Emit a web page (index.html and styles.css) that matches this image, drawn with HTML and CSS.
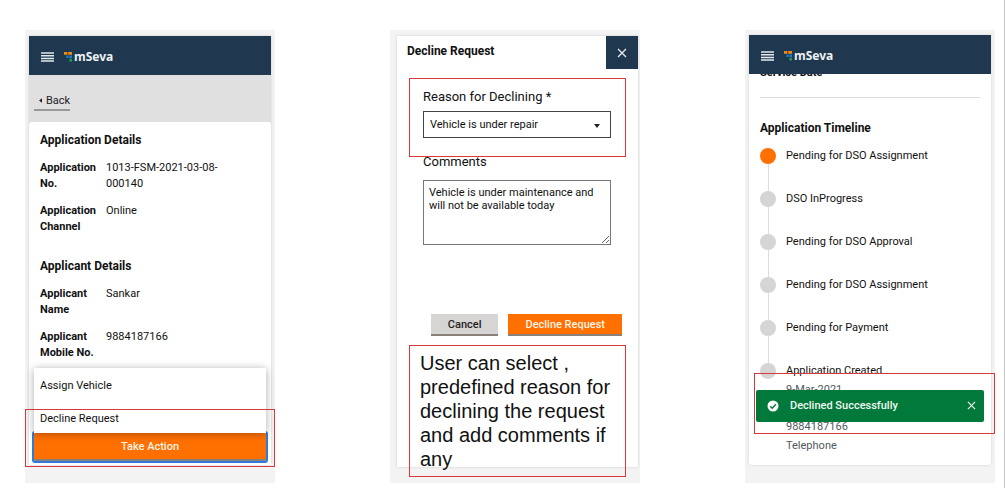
FILE: index.html
```html
<!DOCTYPE html>
<html lang="en">
<head>
<meta charset="utf-8">
<meta name="viewport" content="width=device-width, initial-scale=1">
<title>mSeva – Decline Request</title>
<link rel="stylesheet" href="styles.css">
</head>
<body>
<svg class="defs" aria-hidden="true">
  <symbol id="menu" viewBox="0 0 13 10"><path d="M0 1h13M0 3.700h13M0 6.400h13M0 9.100h13" stroke="#e3e8ec" stroke-width="1.500"/></symbol>
  <symbol id="mark" viewBox="0 0 9 10">
    <path fill="#f08a12" d="M0 0h3.400v2.700H0zM4.200 0h3.800v2.700H4.200z"/>
    <path fill="#1c7fc4" d="M2.400 3.500h2.200v2.400H2.400zM5.400 3.500h2.600v2.400H5.400z"/>
    <path fill="#15a255" d="M5.400 6.700h2.600v2.800H5.400z"/>
  </symbol>
  <symbol id="cross" viewBox="0 0 10 10"><path d="M1 1l8 8M9 1l-8 8" fill="none" stroke="currentColor" stroke-width="1.300"/></symbol>
</svg>
<main class="board">
  <section class="phone">
    <div class="screen">
      <header class="bar">
        <button class="icon-button" aria-label="Menu"><svg class="menu-icon"><use href="#menu"/></svg></button>
        <span class="brand"><svg class="mark"><use href="#mark"/></svg>mSeva</span>
      </header>
      <nav class="crumb"><a class="back" href="#"><svg class="caret" viewBox="0 0 4 6"><path d="M4 0v6L0 3z" fill="#222"/></svg>Back</a></nav>
      <div class="card details">
        <h2 class="heading">Application Details</h2>
        <dl class="facts">
          <dt>Application No.</dt><dd>1013-FSM-2021-03-08-000140</dd>
          <dt>Application Channel</dt><dd>Online</dd>
        </dl>
        <h2 class="heading">Applicant Details</h2>
        <dl class="facts">
          <dt>Applicant Name</dt><dd>Sankar</dd>
          <dt>Applicant Mobile No.</dt><dd>9884187166</dd>
        </dl>
      </div>
      <div class="actions">
        <div class="menu">
          <button class="menu-item">Assign Vehicle</button>
          <button class="menu-item">Decline Request</button>
        </div>
        <button class="button primary take">Take Action</button>
      </div>
    </div>
    <div class="callout callout-action"></div>
  </section>

  <section class="phone phone-dialog">
    <div class="screen dialog">
      <header class="dialog-head">
        <h2 class="dialog-title">Decline Request</h2>
        <button class="close" aria-label="Close"><svg class="cross"><use href="#cross"/></svg></button>
      </header>
      <form class="form">
        <label class="label" for="reason">Reason for Declining *</label>
        <div class="select-wrap">
          <select class="select" id="reason"><option>Vehicle is under repair</option></select>
          <svg class="arrow" viewBox="0 0 6 4"><path d="M0 0h6L3 4z" fill="#222"/></svg>
        </div>
        <label class="label" for="comments">Comments</label>
        <textarea class="textarea" id="comments">Vehicle is under maintenance and will not be available today</textarea>
      </form>
      <footer class="dialog-foot">
        <button class="button secondary">Cancel</button>
        <button class="button primary">Decline Request</button>
      </footer>
    </div>
    <div class="callout callout-reason"></div>
    <p class="callout note">User can select , predefined reason for declining the request and add comments if any</p>
  </section>

  <section class="phone phone-timeline">
    <div class="screen">
      <header class="bar">
        <button class="icon-button" aria-label="Menu"><svg class="menu-icon"><use href="#menu"/></svg></button>
        <span class="brand"><svg class="mark"><use href="#mark"/></svg>mSeva</span>
      </header>
      <div class="card history">
        <p class="service">Service Date</p>
        <hr class="rule">
        <h2 class="heading">Application Timeline</h2>
        <ol class="timeline">
          <li class="step current">Pending for DSO Assignment</li>
          <li class="step">DSO InProgress</li>
          <li class="step">Pending for DSO Approval</li>
          <li class="step">Pending for DSO Assignment</li>
          <li class="step">Pending for Payment</li>
          <li class="step">Application Created</li>
        </ol>
        <div class="meta">
          <p class="date">9-Mar-2021</p>
          <p>9884187166</p>
          <p>Telephone</p>
        </div>
      </div>
    </div>
    <div class="toast" role="status">
      <svg class="check" viewBox="0 0 12 12"><circle cx="6" cy="6" r="5.500" fill="#fff"/><path d="M3.200 6.200l2 2 3.700-4" fill="none" stroke="#00793a" stroke-width="1.400"/></svg>
      <span class="toast-text">Declined Successfully</span>
      <button class="icon-button" aria-label="Dismiss"><svg class="cross small"><use href="#cross"/></svg></button>
    </div>
    <div class="callout callout-toast"></div>
  </section>
</main>
</body>
</html>
```
FILE: styles.css
```css
* { box-sizing: border-box; margin: 0; padding: 0; }
body {
  min-height: 100vh;
  border-right: 1px solid #c4c4c4;
  background: #fff;
  color: #111;
  font: 11px/16px Roboto, "Liberation Sans", sans-serif;
}
button, select, textarea { font: inherit; color: inherit; border: 0; border-radius: 0; background: none; }
svg { display: block; }
.defs { position: absolute; width: 0; height: 0; }

.board {
  display: grid;
  grid-template-columns: 1fr 115px 1fr 105px 1fr;
  padding: 30px 9px 6px 25px;
}
.phone {
  position: relative;
  padding: 6px 4px 18px;
  background: #f3f3f3;
}
.phone-dialog { grid-column: 3; padding: 6px 2px 16px 7px; }
.phone-timeline { grid-column: 5; padding-top: 5px; }
.screen { display: flex; flex-direction: column; height: 100%; background: #fff; }
.phone .screen { box-shadow: 0 0 3px #0002; }

.bar {
  position: relative;
  z-index: 1;
  display: flex;
  align-items: center;
  gap: 10px;
  height: 39px;
  padding: 2px 12px 0;
  background: #1f3850;
}
.icon-button { display: flex; }
.menu-icon { width: 13px; height: 10px; }
.brand { display: flex; align-items: center; gap: 1px; color: #eef1f4; font: bold 12px/16px "Noto Sans", "Open Sans", sans-serif; }
.mark { width: 9px; height: 10px; }

.crumb { padding: 17px 5px 11px; background: #e0e0e0; }
.back {
  display: inline-flex;
  align-items: center;
  gap: 4px;
  padding-left: 5px;
  border-bottom: 2px solid #999;
  color: #222;
  text-decoration: none;
}
.caret { width: 3px; height: 5px; }
.card { padding: 0 11px; background: #fff; }
.details { padding-top: 10px; border-radius: 3px 3px 0 0; box-shadow: 0 -3px 0 #e0e0e0; }
.heading { font-size: 12px; line-height: 16px; font-weight: 700; }
.facts {
  display: grid;
  grid-template-columns: 54px 1fr;
  gap: 11px 12px;
  padding: 12px 28px 23px 0;
}
.facts dt { font-weight: 700; }
.facts:last-child { padding-bottom: 7px; }

.actions { position: relative; margin-top: auto; padding: 0 5px 4px; }
.menu {
  position: relative;
  z-index: 1;
  display: grid;
  background: #fff;
  box-shadow: 0 1px 8px #0005;
}
.menu-item { padding: 11px 6px 6px; line-height: 16px; text-align: left; }
.menu-item:first-child { padding-top: 10px; }
.button { padding: 3px 17px 1px; line-height: 16px; font-weight: 500; border-bottom: 2px solid #8a817a; }
.primary { background: #ff7000; color: #fff3e4; }
.secondary { background: #d6d5d4; color: #222; }
.take { display: block; width: 100%; padding: 6px 5px 4px; outline: 2px solid #2f7bdc; outline-offset: 0; border-radius: 1px; }

.callout { position: absolute; z-index: 3; border: 1px solid #d8383c; }
.callout-action { left: 0; right: 0; bottom: 16px; height: 58px; }
.callout-reason { left: 19px; right: 14px; top: 48px; height: 79px; }
.callout-toast { left: 9px; right: 0; bottom: 49px; height: 61px; }
.note {
  left: 19px;
  right: 14px;
  bottom: 6px;
  padding: 5px 10px;
  color: #111;
  font: 20px/24px "Liberation Sans", Arial, sans-serif;
}

.dialog-head { display: flex; justify-content: space-between; }
.dialog-title { padding: 7px 10px; font-size: 12px; line-height: 16px; }
.close {
  display: grid;
  place-items: center;
  width: 32px;
  height: 33px;
  background: #1f3850;
  color: #e6ebef;
}
.cross { width: 10px; height: 10px; }
.small { width: 9px; height: 9px; }
.form { display: flex; flex-direction: column; padding: 20px 27px 0 26px; }
.label { font-size: 13px; line-height: 16px; }
.select-wrap { position: relative; margin: 6px 0 16px; }
.select { display: block; appearance: none; width: 100%; height: 27px; padding: 0 6px; border: 1px solid #444; }
.arrow { position: absolute; right: 11px; top: 13px; width: 6px; height: 4px; }
.textarea { height: 65px; margin-top: 10px; padding: 5px; border: 1px solid #777; line-height: 13px; }
.dialog-foot { display: flex; justify-content: flex-end; gap: 10px; padding: 69px 16px 128px; }

.phone-timeline .screen { border-radius: 0 0 3px 3px; }
.history { padding-bottom: 8px; }
.service { margin-top: -9px; font-weight: 700; }
.rule { margin: 16px 0 22px; border: 0; border-top: 1px solid #ddd; }
.timeline { padding-top: 12px; list-style: none; }
.step { position: relative; height: 43px; padding-left: 26px; }
.step::before {
  content: "";
  position: absolute;
  left: 0;
  top: 0;
  width: 16px;
  height: 16px;
  border-radius: 50%;
  background: #d6d5d4;
}
.step::after { content: ""; position: absolute; left: 8px; top: 16px; bottom: 0; width: 1px; background: #ddd; }
.step.current::before { background: #ff7000; }
.step:last-child { height: 16px; }
.step:last-child::after { display: none; }
.meta { display: grid; gap: 3px; padding: 3px 0 0 26px; color: #505a5f; }
.date { padding-bottom: 18px; }
.toast {
  position: absolute;
  z-index: 2;
  left: 11px;
  right: 11px;
  bottom: 61px;
  display: flex;
  align-items: center;
  gap: 11px;
  height: 32px;
  padding: 0 8px 0 11px;
  border-radius: 2px;
  background: #00793a;
  color: #f0f8f3;
  font-weight: 500;
}
.check { width: 12px; height: 12px; }
.toast-text { flex: 1; }
```
